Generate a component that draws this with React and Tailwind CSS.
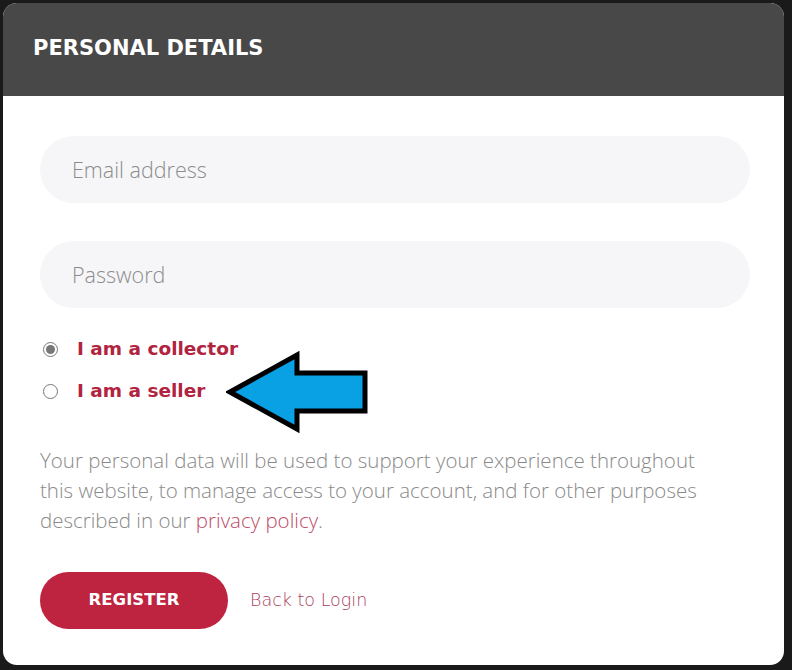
import React, { useState } from 'react';

function Arrow() {
  return (
    <svg width="144" height="88" viewBox="0 0 144 88">
      <path
        d="M4 44 L71 7 L71 25 L139 25 L139 63 L71 63 L71 81 Z"
        fill="#0aa0e4"
        stroke="#000"
        strokeWidth="5"
        strokeLinejoin="miter"
      />
    </svg>
  );
}

export default function App() {
  const [role, setRole] = useState('collector');

  return (
    <div className="w-[792px] h-[670px] bg-[#1a1a1a] pt-[3px] pl-[3px] pr-[8px] pb-[5px]">
      <div className="h-full bg-white rounded-[14px] overflow-hidden flex flex-col">
        {/* header */}
        <div className="h-[93px] bg-[#484848] flex items-center px-[30px] shrink-0">
          <h2 className="text-white font-bold text-[21px] font-['DejaVu_Sans',sans-serif] pb-[2px]">
            PERSONAL DETAILS
          </h2>
        </div>

        <div className="flex-1 px-[37px] pt-[40px] font-['Open_Sans',sans-serif]">
          <input
            type="email"
            placeholder="Email address"
            className="block w-[710px] h-[67px] rounded-full bg-[#f6f6f8] px-[32px] text-[21.5px] font-light text-gray-700 placeholder:text-[#8c8c8c] outline-none"
          />
          <input
            type="password"
            placeholder="Password"
            className="block mt-[38px] w-[710px] h-[67px] rounded-full bg-[#f6f6f8] px-[32px] text-[21.5px] font-light text-gray-700 placeholder:text-[#8c8c8c] outline-none"
          />

          <div className="relative mt-[30px] flex flex-col gap-[20px]">
            <label className="flex items-center gap-[19px] h-[22px] cursor-pointer">
              <input
                type="radio"
                name="role"
                checked={role === 'collector'}
                onChange={() => setRole('collector')}
                className="w-[15px] h-[15px] ml-[3px] accent-[#777]"
              />
              <span className="text-[#b1233f] font-bold text-[18.5px] font-['DejaVu_Sans',sans-serif]">I am a collector</span>
            </label>
            <label className="flex items-center gap-[19px] h-[22px] cursor-pointer">
              <input
                type="radio"
                name="role"
                checked={role === 'seller'}
                onChange={() => setRole('seller')}
                className="w-[15px] h-[15px] ml-[3px] accent-[#777]"
              />
              <span className="text-[#b1233f] font-bold text-[18.5px] font-['DejaVu_Sans',sans-serif]">I am a seller</span>
            </label>
            <div className="absolute left-[186px] top-[10px]">
              <Arrow />
            </div>
          </div>

          <p className="mt-[43px] w-[740px] text-[20.5px] leading-[30px] font-light text-[#8a8a8a]">
            Your personal data will be used to support your experience throughout
            <br />
            this website, to manage access to your account, and for other purposes
            <br />
            described in our <a href="#" className="text-[#c04a67]">privacy policy</a>.
          </p>

          <div className="mt-[37px] flex items-center gap-[22px]">
            <button className="w-[188px] h-[57px] rounded-full bg-[#be2340] text-white font-bold text-[16.5px] font-['DejaVu_Sans',sans-serif]">
              REGISTER
            </button>
            <a href="#" className="text-[#a9405a] text-[17.5px] font-['DejaVu_Sans',sans-serif] font-light">
              Back to Login
            </a>
          </div>
        </div>
      </div>
    </div>
  );
}
